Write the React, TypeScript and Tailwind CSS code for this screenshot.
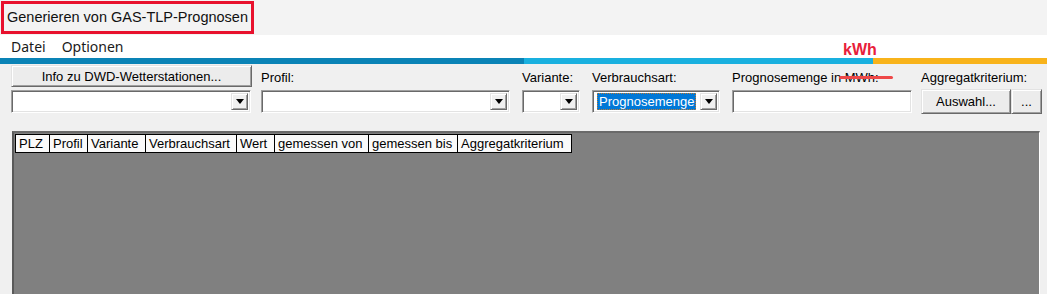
import type { ReactNode } from "react"

const raised =
  "border border-t-[#e3e3e3] border-l-[#e3e3e3] border-r-[#696969] border-b-[#696969] shadow-[inset_1px_1px_0_#ffffff,inset_-1px_-1px_0_#a0a0a0]"
const sunken =
  "border border-t-[#a0a0a0] border-l-[#a0a0a0] border-r-white border-b-white shadow-[inset_1px_1px_0_#696969,inset_-1px_-1px_0_#e3e3e3]"

const Arrow = () => (
  <div className={`flex h-full w-[17px] shrink-0 items-center justify-center bg-[#f0f0f0] ${raised}`}>
    <svg width="8" height="5" viewBox="0 0 8 5">
      <path d="M0 0h8L4 5z" fill="#000" />
    </svg>
  </div>
)

const Combo = ({ width, children }: { width: string; children?: ReactNode }) => (
  <div className={`flex h-[23px] ${width} items-stretch bg-white p-[2px] ${sunken}`}>
    <div className="flex flex-1 items-center pl-[2px]">{children}</div>
    <Arrow />
  </div>
)

const Label = ({ children }: { children: ReactNode }) => (
  <div className="flex h-[22px] items-center whitespace-nowrap pt-[2px] leading-none">{children}</div>
)

const columns = [
  ["PLZ", "w-[34px]"],
  ["Profil", "w-[38px]"],
  ["Variante", "w-[58px]"],
  ["Verbrauchsart", "w-[91px]"],
  ["Wert", "w-[38px]"],
  ["gemessen von", "w-[94px]"],
  ["gemessen bis", "w-[89px]"],
  ["Aggregatkriterium", "w-[113px]"],
]

export default function App() {
  return (
    <div
      className="flex h-[294px] w-[1047px] flex-col overflow-hidden bg-[#f0f0f0] text-[13px] text-black"
      style={{ fontFamily: '"Liberation Sans", Arial, sans-serif' }}
    >
      {/* title bar */}
      <div className="h-[35px] shrink-0 bg-[#f3f3f3] pl-px pt-px">
        <div className="flex h-[33px] w-[253px] items-center whitespace-nowrap border-[3px] border-[#e8112d] pl-[3px] text-[14.5px] text-[#111]">
          Generieren von GAS-TLP-Prognosen
        </div>
      </div>

      {/* menu */}
      <div
        className="relative flex h-[23px] shrink-0 items-center gap-[16px] bg-white pl-[11px] text-[14px] text-[#1a1a1a]"
        style={{ fontFamily: '"Noto Sans", sans-serif' }}
      >
        <span>Datei</span>
        <span>Optionen</span>
        <span
          className="absolute left-[843px] top-[7px] text-[16px] font-bold leading-[16px] text-[#e8203a]"
          style={{ fontFamily: '"Liberation Sans", Arial, sans-serif' }}
        >
          kWh
        </span>
      </div>

      {/* colour stripe */}
      <div className="flex h-[6px] shrink-0">
        <div className="w-[524px] bg-[#0a83b6]" />
        <div className="w-[349px] bg-[#19b0df]" />
        <div className="flex-1 bg-[#f8b31b]" />
      </div>

      {/* controls */}
      <div className="relative flex shrink-0 pl-[11px] pt-px">
        <div className="flex w-[241px] flex-col gap-[3px]">
          <div className={`flex h-[22px] items-center justify-center bg-[#ececec] leading-none ${raised}`}>
            Info zu DWD-Wetterstationen...
          </div>
          <Combo width="w-[240px]" />
        </div>
        <div className="ml-[9px] flex flex-col gap-[3px]">
          <Label>Profil:</Label>
          <Combo width="w-[249px]" />
        </div>
        <div className="ml-[12px] flex flex-col gap-[3px]">
          <Label>Variante:</Label>
          <Combo width="w-[58px]" />
        </div>
        <div className="ml-[12px] flex flex-col gap-[3px]">
          <Label>Verbrauchsart:</Label>
          <Combo width="w-[128px]">
            <span className="flex h-[17px] items-center border border-dotted border-[#c07a30] bg-[#0078d7] px-px leading-none text-white">
              Prognosemenge
            </span>
          </Combo>
        </div>
        <div className="ml-[12px] flex flex-col gap-[3px]">
          <Label>Prognosemenge in MWh:</Label>
          <div className={`h-[23px] w-[180px] bg-white ${sunken}`} />
        </div>
        <div className="ml-[9px] flex flex-col gap-[2px]">
          <Label>Aggregatkriterium:</Label>
          <div className="flex h-[25px]">
            <div className={`flex w-[90px] items-center justify-center bg-[#ececec] leading-none ${raised}`}>
              Auswahl...
            </div>
            <div className={`flex w-[31px] items-center justify-center bg-[#ececec] leading-none ${raised}`}>
              ...
            </div>
          </div>
        </div>
        <div className="absolute left-[839px] top-[12px] h-[3px] w-[54px] rounded-full bg-[#ee4848]" />
      </div>

      {/* grid */}
      <div className="ml-[12px] mt-[17px] w-[1028px] flex-1 border-l-2 border-t-2 border-r border-l-[#5a5a5a] border-t-[#6a6a6a] border-r-white bg-[#808080] pl-px pt-px">
        <div className="flex h-[19px] w-fit border border-black bg-[#fafafa]">
          {columns.map(([name, w], i) => (
            <div
              key={name}
              className={`flex ${w} items-center pl-[3px] leading-none ${i < columns.length - 1 ? "border-r border-black" : ""}`}
            >
              {name}
            </div>
          ))}
        </div>
      </div>
    </div>
  )
}
